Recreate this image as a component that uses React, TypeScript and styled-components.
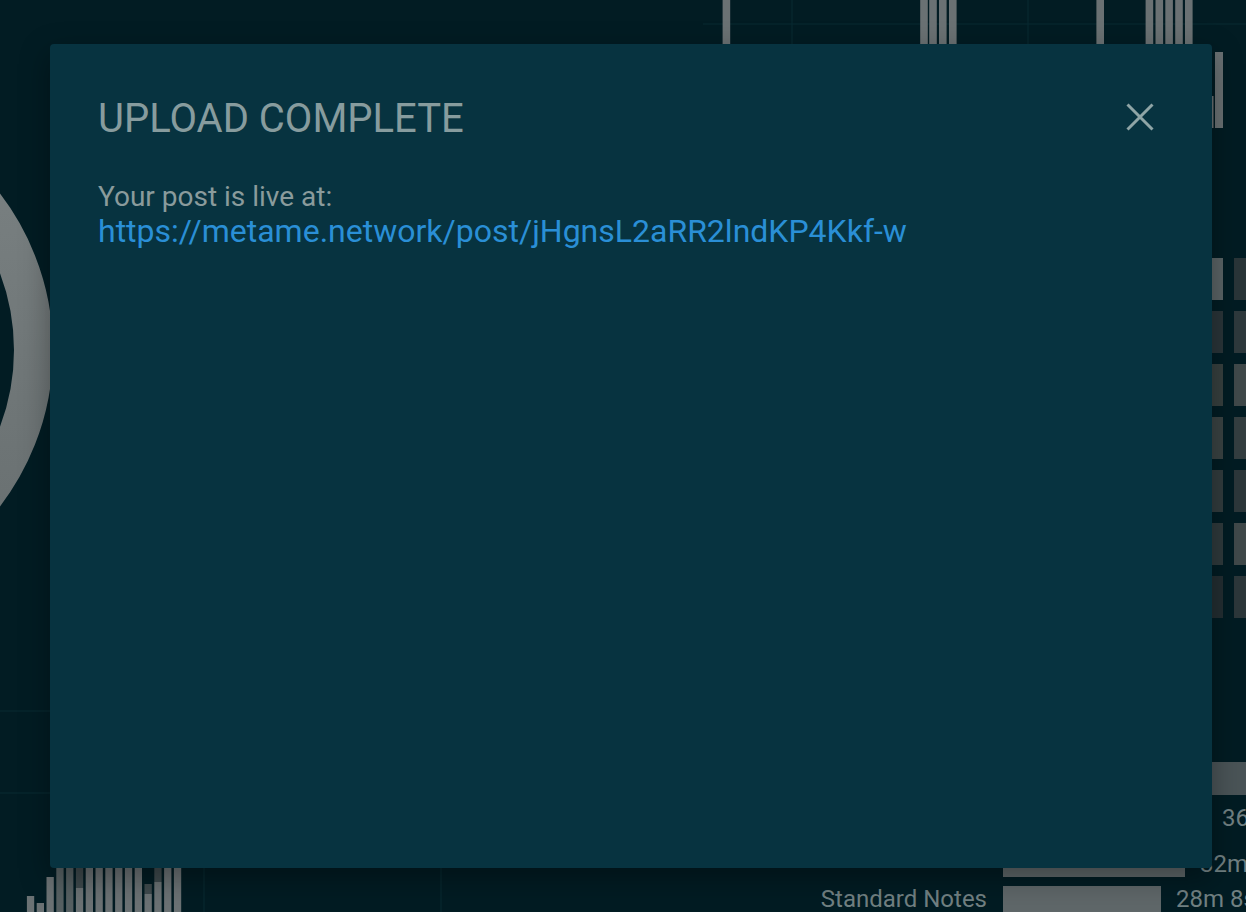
import * as React from "react";
import styled, { createGlobalStyle } from "styled-components";

const GlobalStyle = createGlobalStyle`
  html, body {
    margin: 0;
    padding: 0;
    background: #021c23;
    font-family: Roboto, "Liberation Sans", sans-serif;
  }
`;

const Page = styled.div`
  position: relative;
  width: 1246px;
  height: 912px;
  overflow: hidden;
  display: grid;
  grid-template-rows: 128px 632px 152px;
  background: #021c23;
`;

const Middle = styled.div`
  display: flex;
  justify-content: space-between;
  align-items: flex-start;
`;

const Heatmap = styled.div`
  display: grid;
  grid-template-columns: repeat(2, 42px);
  grid-auto-rows: 42px;
  gap: 11px;
  padding-top: 130px;
  margin-right: -30px;
`;

const Cell = styled.div<{ $shade: string }>`
  background: ${(p) => p.$shade};
`;

const Bottom = styled.div`
  display: flex;
  justify-content: space-between;
`;

const StatsPanel = styled.div`
  width: 439px;
  flex-shrink: 0;
  display: flex;
  flex-direction: column;
  color: #718082;
  font-size: 24px;
`;

const GreyBlock = styled.div`
  margin: 2px 0 0 300px;
  height: 33px;
  background: #4a5457;
`;

const LoneValue = styled.div`
  padding-left: 415px;
  line-height: 46px;
  height: 46px;
  white-space: nowrap;
`;

const StatRow = styled.div<{ $gap: number }>`
  display: flex;
  align-items: center;
  height: 26px;
  margin-top: ${(p) => p.$gap}px;
  white-space: nowrap;
`;

const StatLabel = styled.div`
  width: 180px;
  flex-shrink: 0;
  text-align: right;
  margin-right: 16px;
`;

const StatBar = styled.div<{ $w: number }>`
  width: ${(p) => p.$w}px;
  height: 26px;
  background: #5f6769;
  flex-shrink: 0;
`;

const StatValue = styled.div`
  margin-left: 15px;
  flex-shrink: 0;
`;

const Dialog = styled.div`
  position: absolute;
  left: 50px;
  top: 44px;
  width: 1162px;
  height: 824px;
  box-sizing: border-box;
  padding: 51px 48px;
  background: #073340;
  border-radius: 4px;
  box-shadow: 0 10px 30px rgba(0, 0, 0, 0.35);
`;

const Header = styled.div`
  display: flex;
  justify-content: space-between;
  align-items: center;
`;

const Title = styled.h2`
  margin: 0;
  font-size: 40px;
  font-weight: 400;
  line-height: 47px;
  color: #879c9e;
`;

const CloseButton = styled.button`
  width: 48px;
  height: 48px;
  margin: -4px 0 0 0;
  padding: 0;
  border: none;
  background: transparent;
  display: flex;
  align-items: center;
  justify-content: center;
  cursor: pointer;
`;

const Body = styled.div`
  margin-top: 36px;
  font-size: 28px;
  line-height: 37px;
  color: #8a9b9c;
`;

const PostLink = styled.a`
  display: block;
  font-size: 32px;
  line-height: 32px;
  color: #2a8fd6;
  text-decoration: none;
`;

const topBars = [722.6, 920.2, 929.2, 939, 949, 1096.4, 1145.6, 1155.5, 1165.3, 1175.2, 1185];

const heatShades = [
  "#5b6466", "#2a3538",
  "#2a3539", "#2e393c",
  "#37403f", "#40494a",
  "#3a4343", "#343e40",
  "#323c3e", "#2c373a",
  "#2f3a3c", "#40494a",
  "#232e32", "#2c373a",
];

// [light top, dark top, dimmed] in page y
const miniBars: [number, number | null, boolean?][] = [
  [896, null],
  [903, null],
  [877, null],
  [860, null, true],
  [860, null, true],
  [888, 860],
  [860, null],
  [860, null],
  [860, null],
  [860, null],
  [860, null],
  [860, null],
  [894, 884],
  [882, 860],
  [860, null],
  [860, null],
];

const TopChart = () => (
  <svg width={1246} height={128}>
    <line x1={703} y1={24} x2={1246} y2={24} stroke="#082a32" strokeWidth={1} />
    <line x1={792} y1={0} x2={792} y2={128} stroke="#082a32" strokeWidth={1} />
    <line x1={1028} y1={0} x2={1028} y2={128} stroke="#082a32" strokeWidth={1} />
    {topBars.map((x) => (
      <rect key={x} x={x} y={0} width={7.6} height={128} fill="#6a7173" />
    ))}
    <rect x={1211} y={96} width={2.5} height={32} fill="#6a7173" />
    <rect x={1215} y={52} width={8} height={76} fill="#6a7173" />
  </svg>
);

const Donut = () => (
  <svg width={60} height={632}>
    <defs>
      <linearGradient id="ring" x1="0" y1="0" x2="0" y2="1">
        <stop offset="0" stopColor="#7b8283" />
        <stop offset="1" stopColor="#676e6f" />
      </linearGradient>
    </defs>
    <circle cx={-204} cy={222} r={237.5} fill="none" stroke="url(#ring)" strokeWidth={39} />
    <line x1={0} y1={583} x2={60} y2={583} stroke="#082a32" strokeWidth={1} />
  </svg>
);

const MiniBars = () => (
  <svg width={460} height={152}>
    <line x1={0} y1={33} x2={460} y2={33} stroke="#082a32" strokeWidth={1} />
    <line x1={204} y1={0} x2={204} y2={152} stroke="#082a32" strokeWidth={1} />
    <line x1={441} y1={0} x2={441} y2={152} stroke="#082a32" strokeWidth={1} />
    {miniBars.map(([light, dark, dim], i) => {
      const x = 26.9 + i * 9.8;
      return (
        <g key={i}>
          {dark !== null && (
            <rect x={x} y={dark - 760} width={7.3} height={light - dark} fill="#3f4a4d" />
          )}
          <rect
            x={x}
            y={light - 760}
            width={7.3}
            height={912 - light}
            fill={dim ? "#566062" : "#6b7274"}
          />
        </g>
      );
    })}
  </svg>
);

const CloseIcon = () => (
  <svg width={28} height={28} viewBox="0 0 28 28">
    <path d="M1.5 1.5 L26.5 26.5 M26.5 1.5 L1.5 26.5" stroke="#8fa5a6" strokeWidth={3} />
  </svg>
);

export default function App() {
  return (
    <>
      <GlobalStyle />
      <Page>
        <TopChart />
        <Middle>
          <Donut />
          <Heatmap>
            {heatShades.map((s, i) => (
              <Cell key={i} $shade={s} />
            ))}
          </Heatmap>
        </Middle>
        <Bottom>
          <MiniBars />
          <StatsPanel>
            <GreyBlock />
            <LoneValue>36m</LoneValue>
            <StatRow $gap={10}>
              <StatLabel />
              <StatBar $w={182} />
              <StatValue>32m</StatValue>
            </StatRow>
            <StatRow $gap={9}>
              <StatLabel>Standard Notes</StatLabel>
              <StatBar $w={158} />
              <StatValue>28m 8s</StatValue>
            </StatRow>
          </StatsPanel>
        </Bottom>

        <Dialog role="dialog">
          <Header>
            <Title>UPLOAD COMPLETE</Title>
            <CloseButton aria-label="close">
              <CloseIcon />
            </CloseButton>
          </Header>
          <Body>
            Your post is live at:
            <PostLink href="#">https://metame.network/post/jHgnsL2aRR2lndKP4Kkf-w</PostLink>
          </Body>
        </Dialog>
      </Page>
    </>
  );
}
